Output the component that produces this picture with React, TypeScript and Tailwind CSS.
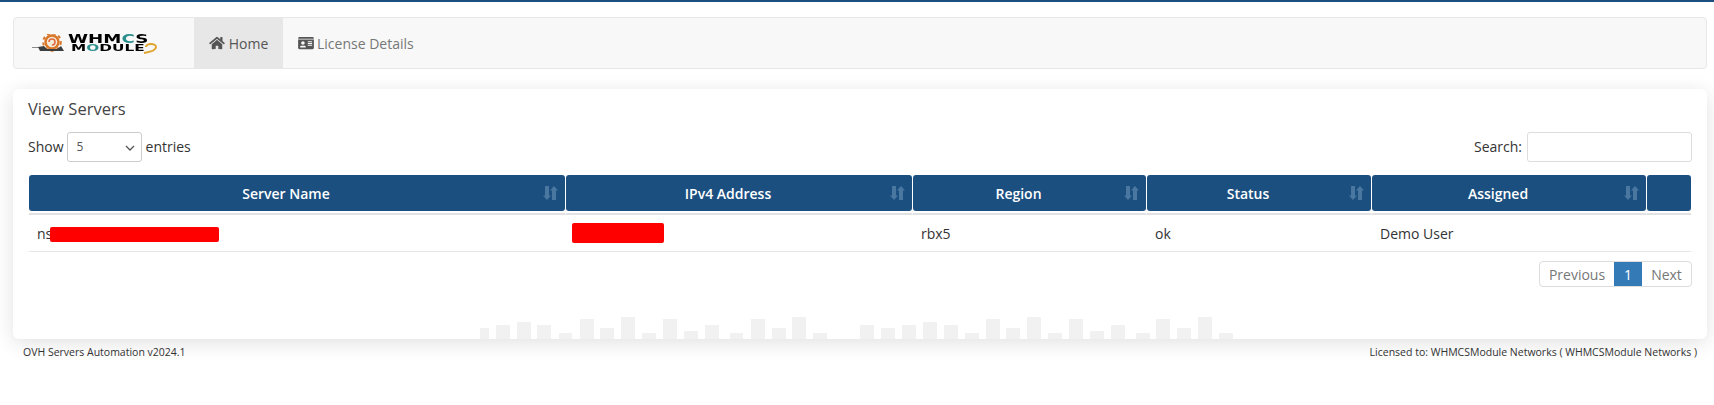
import { FaHome, FaIdCard } from 'react-icons/fa';

const columns = [
  { name: 'Server Name', width: 'w-[537px]' },
  { name: 'IPv4 Address', width: 'w-[347px]' },
  { name: 'Region', width: 'w-[234px]' },
  { name: 'Status', width: 'w-[225px]' },
  { name: 'Assigned', width: 'w-[275px]' },
];

// [x offset, width, height] of the faint bars behind the card footer
const bars: [number, number, number][] = [
  [0, 9, 11], [16, 14, 14], [37, 14, 17], [57, 14, 14], [79, 13, 6], [100, 14, 20], [120, 14, 11], [141, 14, 22],
  [162, 14, 6], [183, 14, 20], [204, 14, 8], [225, 14, 14], [250, 13, 6], [271, 14, 20], [292, 14, 11], [312, 14, 22],
  [333, 14, 6], [380, 14, 14], [401, 14, 11], [422, 14, 14], [443, 14, 17], [464, 14, 14], [485, 14, 6], [506, 14, 20],
  [526, 14, 11], [547, 14, 22], [568, 14, 6], [589, 14, 20], [610, 14, 8], [631, 14, 14], [656, 14, 6], [676, 14, 20],
  [697, 14, 11], [718, 14, 22], [739, 14, 6],
];

function SortIcon() {
  return (
    <svg viewBox="0 0 15 14" className="absolute right-[7px] top-[11px] h-[14px] w-[15px] fill-[#4a779f]">
      <path d="M2 0h4v9.500h2L4 14 0 9.500h2z" />
      <path d="M9 4.500H7L11 0l4 4.500h-2V14H9z" />
    </svg>
  );
}

function Logo() {
  return (
    <div className="relative flex h-[22px] w-[127px] items-center blur-[0.3px]">
      <svg viewBox="0 0 36 18" className="h-[18px] w-[36px] shrink-0">
        <path d="M0 13h9v1H0z" fill="#8a8a8a" />
        <circle cx="20" cy="8" r="6.500" fill="#f4ead8" stroke="#d9772a" strokeWidth="2.500" />
        <circle cx="20" cy="8" r="8.800" fill="none" stroke="#d9772a" strokeWidth="2" strokeDasharray="3 3" />
        <path d="M17 8a3 3 0 1 1 3 3" fill="none" stroke="#e0663c" strokeWidth="1.500" />
        <path d="M6 13l6-1 3 3h10l4-3 3 5H8z" fill="#3c3f41" />
      </svg>
      <div className="flex flex-col font-['DejaVu_Sans',sans-serif] font-bold text-black">
        <span className="origin-left scale-x-[1.4] text-[13px] leading-[10px] whitespace-nowrap">
          WHM<span className="text-[#2a8f8c]">C</span>S
        </span>
        <span className="ml-[3px] origin-left scale-x-[1.8] text-[8.500px] leading-[8px] whitespace-nowrap">
          M<span className="text-[#2a8f8c]">O</span>DULE
        </span>
      </div>
      <svg viewBox="0 0 16 12" className="absolute bottom-[-1px] right-0 h-[12px] w-[16px] fill-none stroke-[#dfa52f] stroke-[2]">
        <path d="M3 4a5 3 0 0 1 10 0c0 3-5 5-12 6" />
      </svg>
    </div>
  );
}

export default function App() {
  return (
    <div className="min-h-[405px] border-t-2 border-[#1b4f80] bg-white pl-[13px] pr-[7px] pt-[15px] font-['Open_Sans',sans-serif] text-[14px] text-[#333]">
      {/* Navbar */}
      <nav className="flex h-[52px] items-stretch rounded-[4px] border border-[#e7e7e7] bg-[#f8f8f8]">
        <div className="flex w-[180px] items-center pl-[18px]">
          <Logo />
        </div>
        <a className="flex w-[89px] items-center justify-center gap-[4px] bg-[#e7e7e7] text-[#555]">
          <FaHome className="h-[14px] w-[16px]" />
          <span>Home</span>
        </a>
        <a className="flex items-center gap-[3px] px-[15px] text-[#777]">
          <FaIdCard className="h-[14px] w-[16px] text-[#555]" />
          <span>License Details</span>
        </a>
      </nav>

      {/* Card */}
      <section className="relative mt-[20px] h-[250px] overflow-hidden rounded-[6px] bg-white px-[15px] pt-[9px] shadow-[0_4px_20px_rgba(0,0,0,0.12)]">
        <h2 className="text-[16.500px] leading-[22px] text-[#444]">View Servers</h2>

        <div className="mt-[12px] flex items-center justify-between">
          <label className="flex items-center">
            <span className="pb-[2px]">Show</span>
            <span className="relative ml-[3px] mr-[4px] flex h-[30px] w-[75px] items-center rounded-[3px] border border-[#ccc] pl-[9px] text-[12px] text-[#555]">
              5
              <svg viewBox="0 0 10 6" className="absolute right-[6px] top-[12px] h-[6px] w-[10px] fill-none stroke-[#555] stroke-[1.3]">
                <path d="M1 1l4 4 4-4" />
              </svg>
            </span>
            <span className="pb-[2px]">entries</span>
          </label>
          <label className="flex items-center gap-[5px]">
            <span className="pb-[2px]">Search:</span>
            <input className="h-[30px] w-[165px] rounded-[3px] border border-[#ddd] outline-none" />
          </label>
        </div>

        <table className="mx-px mt-[13px] w-[1662px] table-fixed border-separate border-spacing-0">
          <thead>
            <tr>
              {columns.map((col) => (
                <th key={col.name} className={`${col.width} border-r border-b-2 border-r-white border-b-[#e2e2e2] p-0 pb-[2px]`}>
                  <div className="relative flex h-[36px] items-center justify-center rounded-[3px] bg-[#1b4f80] pr-[22px] font-semibold text-white">
                    {col.name}
                    <SortIcon />
                  </div>
                </th>
              ))}
              <th className="border-b-2 border-b-[#e2e2e2] p-0 pb-[2px]">
                <div className="h-[36px] rounded-[3px] bg-[#1b4f80]" />
              </th>
            </tr>
          </thead>
          <tbody>
            <tr>
              <td className="relative h-[37px] border-b border-[#e7e7e7] px-[8px]">
                ns
                <span className="absolute left-[21px] top-[12px] h-[15px] w-[169px] rounded-[2px] bg-[#ff0000]" />
              </td>
              <td className="relative h-[37px] border-b border-[#e7e7e7] px-[8px]">
                <span className="absolute left-[6px] top-[8px] h-[20px] w-[92px] rounded-[2px] bg-[#ff0000]" />
              </td>
              <td className="border-b border-[#e7e7e7] px-[8px]">rbx5</td>
              <td className="border-b border-[#e7e7e7] px-[8px]">ok</td>
              <td className="border-b border-[#e7e7e7] px-[8px]">Demo User</td>
              <td className="border-b border-[#e7e7e7] px-[8px]"></td>
            </tr>
          </tbody>
        </table>

        <div className="mt-[9px] flex justify-end">
          <div className="flex h-[26px] items-stretch overflow-hidden rounded-[4px] border border-[#ddd] text-[#777]">
            <span className="flex w-[74px] items-center justify-center">Previous</span>
            <span className="flex w-[28px] items-center justify-center bg-[#337ab7] text-white">1</span>
            <span className="flex w-[49px] items-center justify-center">Next</span>
          </div>
        </div>

        {/* decorative bars */}
        <svg viewBox="0 0 760 22" className="absolute bottom-0 left-[467px] h-[22px] w-[760px] fill-[#f1f1f1]">
          {bars.map(([x, w, h]) => (
            <rect key={x} x={x} y={22 - h} width={w} height={h} />
          ))}
        </svg>
      </section>

      {/* Footer */}
      <footer className="mt-[5px] flex justify-between pl-[10px] pr-[10px] text-[10.500px] leading-[16px] text-[#333]">
        <span>OVH Servers Automation v2024.1</span>
        <span>Licensed to: WHMCSModule Networks ( WHMCSModule Networks )</span>
      </footer>
    </div>
  );
}
